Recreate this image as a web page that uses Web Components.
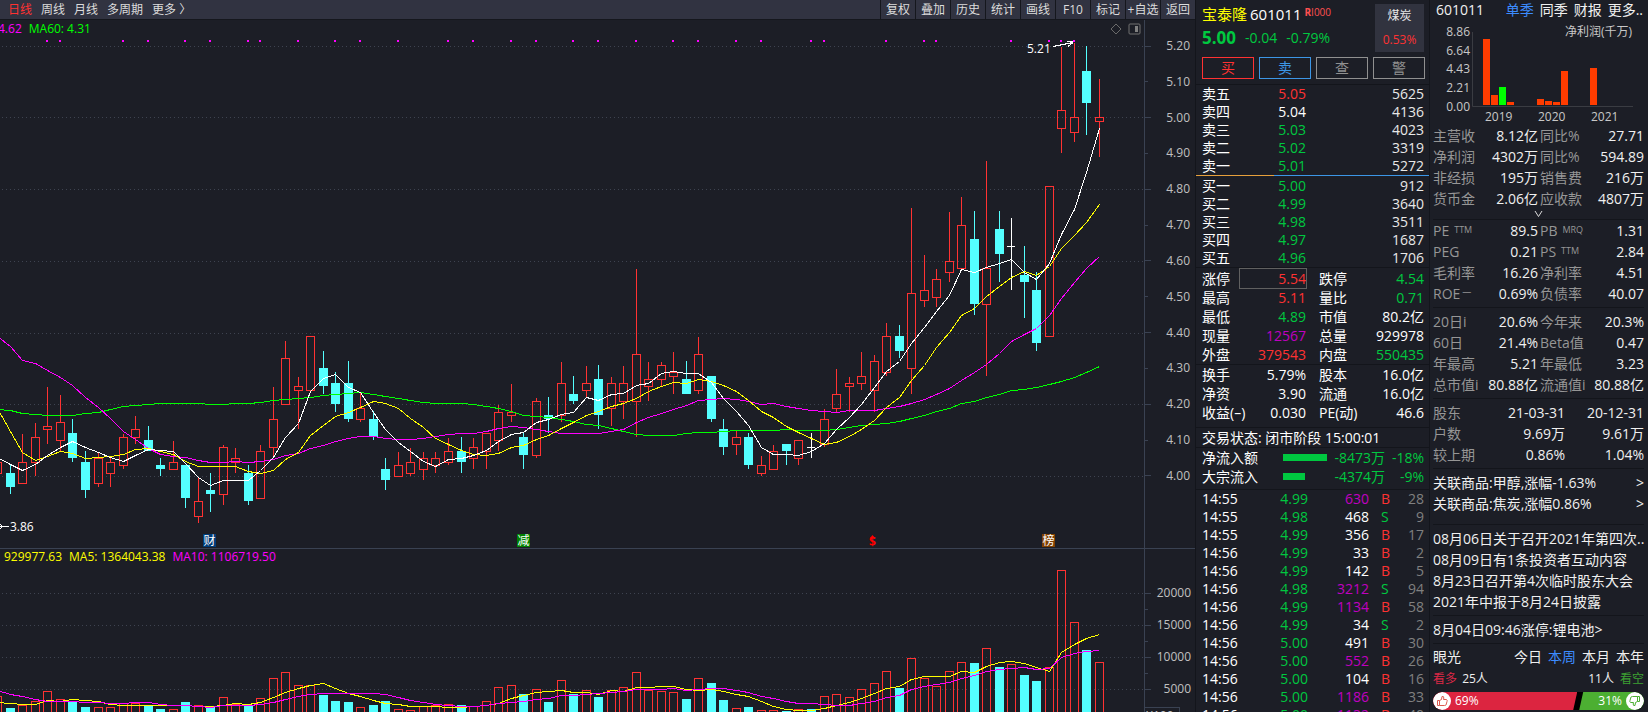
<!DOCTYPE html>
<html lang="zh-CN">
<head>
<meta charset="utf-8">
<title>宝泰隆 601011</title>
<style>
  body { margin: 0; background: #1c1e26; }
</style>
</head>
<body>
<stock-app></stock-app>
<script>
const BASE = `
  * { box-sizing: border-box; }
  table { border-collapse: collapse; table-layout: fixed; width: 100%; }
  td, th { padding: 0; font-weight: 400; text-align: left; white-space: nowrap; }
  a { color: inherit; text-decoration: none; }
  button { font: inherit; color: inherit; background: none; border: 0; padding: 0; margin: 0; cursor: pointer; white-space: nowrap; }
  .r { text-align: right; }
  .up { color: #ff3232; } .dn { color: #00c840; } .big { color: #c000c0; } .mute { color: #808080; }
`;
function define(name, render) {
  customElements.define(name, class extends HTMLElement {
    constructor() {
      super();
      this.attachShadow({ mode: 'open' }).innerHTML = render();
    }
  });
}

/* ---------- market data: [kind, high, body top, body bottom, low] ---------- */
const FIRST = -1;
const slotX = i => Math.round(9.9 + 12.517 * i);
const CANDLES = [
['U',462,462,474,474],['D',465,473,487,494],['U',434,462,484,484],['U',423,437,463,476],['U',387,426,430,444],['U',395,422,441,451],
['D',419,433,458,462],['D',451,462,490,498],['U',453,458,484,487],['U',457,462,474,487],['U',434,437,466,469],['U',416,429,438,444],
['D',426,440,451,451],['D',458,465,469,476],['U',441,462,470,470],['D',465,465,498,508],['U',477,501,517,523],['D',473,490,494,512],
['U',445,447,495,505],['U',448,458,463,473],['D',465,473,501,505],['U',445,451,499,499],['U',387,419,448,458],['U',341,358,405,405],
['U',377,386,391,429],['U',336,336,391,391],['D',351,368,386,394],['D',372,383,404,412],['D',361,383,419,422],['U',393,408,420,422],
['D',411,419,437,440],['D',458,469,480,490],['U',452,465,477,477],['U',448,462,474,476],['U',452,458,470,480],['U',452,458,466,473],
['U',438,451,463,465],['D',437,451,462,473],['U',438,447,459,469],['U',433,433,452,469],['U',405,412,441,451],['U',384,412,416,422],
['D',433,437,455,469],['U',398,401,456,458],['D',397,415,419,433],['U',362,383,416,422],['D',376,394,401,404],['U',366,383,391,397],
['D',365,379,415,429],['U',377,383,409,426],['U',366,383,402,419],['U',269,354,402,437],['U',362,379,387,401],['U',362,365,380,387],
['U',352,372,377,394],['D',361,379,394,394],['U',337,354,391,394],['D',376,376,419,422],['D',419,429,447,455],['U',431,437,445,455],
['D',433,437,465,469],['U',456,465,474,476],['U',445,451,470,470],['D',444,444,451,465],['U',440,440,459,465],['X',433,447,448,458],
['U',409,419,445,447],['U',369,394,409,412],['U',377,383,387,412],['U',352,376,384,390],['U',355,361,391,412],['U',323,336,373,376],
['D',325,336,351,358],['U',208,293,369,394],['U',255,290,301,307],['U',269,279,298,307],['U',212,261,273,282],['U',197,225,269,269],
['D',211,239,304,315],['U',161,268,305,376],['D',211,229,254,282],['X',218,246,247,290],['D',246,275,282,318],['D',272,290,343,351],
['U',186,186,337,337],['U',47,110,129,153],['U',43,117,133,142],['D',46,71,103,135],['U',79,117,122,157]];
const MA5 = [457,464,470,464,455,447,441,447,452,457,461,455,449,450,451,463,477,485,480,480,480,470,457,437,423,391,378,374,387,392,412,429,442,451,461,466,459,458,455,450,441,434,432,422,419,414,412,397,400,394,393,385,383,373,371,373,373,382,398,411,425,447,454,454,455,451,443,429,417,404,387,371,361,343,327,311,295,269,272,267,263,259,272,279,263,234,209,172,128];
const MA10 = [408,431,452,460,456,451,453,458,457,456,454,449,448,451,454,461,466,466,466,466,471,473,470,459,452,435,425,416,412,407,401,403,408,418,427,438,444,450,454,455,453,447,445,439,435,428,422,415,411,406,403,398,391,386,382,383,379,381,385,391,400,411,417,426,432,438,444,442,436,429,420,407,397,380,365,347,332,315,308,296,286,277,271,275,266,248,235,222,204];
const MA20 = [336,346,360,363,370,377,385,397,407,418,431,439,448,454,456,457,460,462,462,461,462,461,459,455,453,448,445,441,438,436,436,438,439,439,438,436,434,433,433,431,428,426,427,429,431,433,433,433,433,431,429,422,417,413,409,405,400,399,398,399,401,404,403,406,408,410,411,412,410,410,410,408,406,403,399,394,388,380,372,364,353,341,334,328,315,298,282,268,256];
const MA60 = [409,410,413,414,415,415,415,413,412,409,406,405,404,403,403,403,403,404,404,403,403,402,400,399,398,397,395,394,393,392,394,396,398,400,402,403,403,403,404,406,408,411,415,416,417,419,421,424,425,428,431,434,435,435,435,433,432,432,431,430,430,430,430,429,430,430,430,429,427,425,424,423,421,418,415,411,408,403,401,397,394,390,389,387,384,381,377,372,366];
const VOL = [696,708,705,701,691,699,702,707,707,707,703,703,706,709,709,702,705,707,697,704,706,698,678,672,685,685,695,701,702,707,705,701,709,710,706,705,704,705,706,701,687,685,694,689,702,680,694,690,697,690,687,672,690,691,692,699,678,683,700,708,707,710,710,711,709,709,696,694,697,689,683,671,688,658,678,686,671,662,663,648,667,664,675,681,667,570,622,650,662];
const VMA5 = [702,703,704,704,700,701,699,700,701,704,705,705,705,705,705,705,706,706,705,703,704,702,697,692,688,685,683,688,693,696,700,703,704,706,706,706,707,707,706,705,703,698,695,692,691,690,692,692,694,690,691,687,687,686,686,689,690,689,691,694,696,701,706,709,710,710,708,705,702,698,693,688,686,679,676,676,676,671,672,666,662,661,663,667,671,652,644,638,634];
const VMA10 = [690,694,696,699,701,701,701,702,702,703,703,702,702,704,705,705,706,707,705,705,705,704,702,699,696,694,693,693,693,693,693,694,697,700,702,704,705,706,706,705,703,702,701,699,698,695,695,694,693,692,691,689,689,689,688,690,689,688,688,690,692,696,698,701,703,703,704,705,705,703,701,697,695,689,686,684,682,678,675,671,669,668,667,669,668,657,653,651,650];
const MARKS = [3,4,9,11,14,16,19,20,23,26,28,31,35,37,40,42,45,47,50,53,55,58,60,64,65,70,73,74,80,83,84,85];

const RED = '#ff3232', CYAN = '#54ffff';
const line = (ys, c) => `<polyline fill="none" stroke="${c}" points="${ys.map((y, k) => `${slotX(k + FIRST) + .5},${y + .5}`).join(' ')}"/>`;
const box = (x, t, b, c, hollow) => hollow
  ? `<rect x="${x - 3.5}" y="${t + .5}" width="8" height="${b - t - 1}" fill="none" stroke="${c}"/>`
  : `<rect x="${x - 4}" y="${t}" width="9" height="${b - t}" fill="${c}"/>`;
const vline = (x, a, b, c) => b > a ? `<rect x="${x}" y="${a}" width="1" height="${b - a}" fill="${c}"/>` : '';
const grid = ys => ys.map(y => `<line x1="2" x2="1143" y1="${y}.5" y2="${y}.5" stroke="#3e4350" stroke-dasharray="1 3"/>`).join('');
const drawCandle = ([kind, h, t, b, l], k) => {
  const x = slotX(k + FIRST);
  if (kind === 'X') return vline(x, h, l, '#fff') + `<rect x="${x - 4}" y="${t}" width="8" height="1" fill="#fff"/>`;
  const c = kind === 'U' ? RED : CYAN;
  return vline(x, h, t, c) + vline(x, b, l, c) + box(x, t, b, c, kind === 'U');
};
const drawVolume = (y, k) => {
  const up = CANDLES[k][0] === 'U' || k === 81;
  return box(slotX(k + FIRST), y, 722, up ? RED : CYAN, up);
};

define('chart-toolbar', () => `<style>${BASE}
  :host { display: flex; justify-content: space-between; height: 20px; background: #313341; border-bottom: 1px solid #15171d;
    font-size: 12px; line-height: 18px; color: #dcdcdc; }
  nav { display: flex; }
  .periods { gap: 9px; padding-left: 8px; }
  .tools button { width: 35px; border-left: 1px solid #15171d; }
  .on { color: #ff3232; }
</style>
<nav class="periods"><button class="on">日线</button><button>周线</button><button>月线</button><button>多周期</button><button>更多 〉</button></nav>
<nav class="tools">${['复权','叠加','历史','统计','画线','F10','标记','+自选','返回'].map(t => `<button>${t}</button>`).join('')}</nav>`);

const CHART = `${BASE}
  :host { display: grid; grid-template-columns: minmax(0, 1fr) 51px; min-height: 0; font-size: 12px; overflow: hidden; }
  .plot { position: relative; min-height: 0; min-width: 0; overflow: hidden; }
  .plot > svg { display: block; width: 100%; height: 100%; }
  .legend { position: absolute; left: 0; top: 0; display: flex; line-height: 18px; white-space: pre; }
  .yellow { color: #ff0; } .pink { color: #f0f; } .green { color: #0f0; }
  .axis { border-left: 1px solid #3a4252; color: #c0c0c0; display: flex; flex-direction: column; overflow: hidden; }
  .axis div { display: flex; align-items: center; justify-content: space-between; padding-right: 5px; }
  .axis div::before { content: ""; width: 3px; height: 1px; background: #3a4252; }
  .axis .major::before { width: 6px; }
`;
const pct = (x, y) => `left:${(x / 1144 * 100).toFixed(3)}%;top:${((y - 20) / 528 * 100).toFixed(3)}%`;

define('price-chart', () => `<style>${CHART}
  .legend { left: -2px; gap: 7px; }
  .axis { justify-content: space-between; padding: 17px 0 63px; line-height: 18px; }
  .note, .badge, .tools { position: absolute; line-height: 16px; color: #fff; }
  .badge { min-width: 13px; line-height: 18px; text-align: center; }
  .badge::before { content: ""; position: absolute; inset: 2px 0 3px; background: var(--fill); z-index: -1; }
  .badge { z-index: 0; }
  .coin { display: grid; justify-items: center; line-height: 14px; color: #f00; font-weight: 700; }
  .coin svg { position: absolute; top: 0; }
  .tools { right: 3px; top: 3px; display: flex; gap: 6px; }
</style>
<div class="plot">
  <svg viewBox="0 20 1144 528" preserveAspectRatio="none" shape-rendering="crispEdges" role="img" aria-label="日线">
    ${grid([46, 117, 189, 261, 333, 404, 476])}
    ${MARKS.map(i => `<rect x="${slotX(i) - 1}" y="40" width="2" height="2" fill="#f0f"/>`).join('')}
    ${CANDLES.map(drawCandle).join('')}
    ${line(MA60, '#0f0')}${line(MA20, '#f0f')}${line(MA10, '#ff0')}${line(MA5, '#fff')}
    <path d="M1053 46.5L1073 42.5M1067 41.5H1073M1068 46.5L1073 42.5M0 526.5H9M0 524.5L3 526.5M0 528.5L3 526.5" stroke="#fff" fill="none"/>
  </svg>
  <div class="legend"><span class="pink">4.62</span><span class="green">MA60: 4.31</span></div>
  <div class="tools">
    <svg width="12" height="12" viewBox="0 0 12 12" fill="none" stroke="#6a6a6a"><path d="M6 1L11 6L6 11L1 6Z"/></svg>
    <svg width="13" height="12" viewBox="0 0 13 12"><rect x="1" y="1" width="11" height="10" rx="1" fill="none" stroke="#707070"/><path d="M7 3H10V9H7Z" fill="#808080"/></svg>
  </div>
  <span class="note" style="${pct(1027, 41)}">5.21</span>
  <span class="note" style="${pct(10, 519)}">3.86</span>
  <span class="badge" style="${pct(203, 532)};--fill:#003c78">财</span>
  <span class="badge" style="${pct(517, 532)};--fill:#008000">减</span>
  <span class="badge coin" style="${pct(866, 535)}"><svg width="5" height="3" viewBox="0 0 5 3"><path d="M2.500 0L5 3H0Z" fill="#f00"/></svg>$</span>
  <span class="badge" style="${pct(1042, 532)};--fill:#804000">榜</span>
</div>
<div class="axis">${['5.20','5.10','5.00','4.90','4.80','4.70','4.60','4.50','4.40','4.30','4.20','4.10','4.00'].map((v, i) => `<div class="${i % 2 ? '' : 'major'}">${v}</div>`).join('')}</div>`);

define('volume-chart', () => `<style>${CHART}
  :host { border-top: 1px solid #3a4252; }
  .legend { left: 4px; gap: 7px; line-height: 16px; }
  .axis { padding-top: 36px; line-height: 16px; }
  .axis div { flex: 0 0 16px; padding-right: 4px; }
  .axis .unit { flex: 0 0 18px; align-self: flex-start; width: 35px; margin-top: 10px; padding: 0 3px 0 1px; border: 1px solid #3a4252; border-left: 0; }
  .axis .unit::before { display: none; }
</style>
<div class="plot">
  <svg viewBox="0 549 1144 163" preserveAspectRatio="none" shape-rendering="crispEdges" role="img" aria-label="成交量">
    ${grid([593, 625, 657, 689])}
    ${VOL.map(drawVolume).join('')}
    ${line(VMA5, '#ff0')}${line(VMA10, '#f0f')}
  </svg>
  <div class="legend"><span class="yellow">929977.63</span><span class="yellow">MA5: 1364043.38</span><span class="pink">MA10: 1106719.50</span></div>
</div>
<div class="axis"><div class="major">20000</div><div></div><div class="major">15000</div><div></div><div class="major">10000</div><div></div><div class="major">5000</div><div class="unit">X100</div></div>`);

define('quote-header', () => `<style>${BASE}
  :host { display: block; padding: 4px 0 5px; }
  .top { display: grid; grid-template-columns: 1fr 49px; height: 53px; }
  .name { display: flex; gap: 3px; font-size: 15px; line-height: 20px; white-space: nowrap; }
  .name b { font-weight: 400; color: #ff0; }
  .name small { font-size: 10px; line-height: 16px; color: #ff5050; }
  .price { display: flex; gap: 9px; align-items: center; font-size: 14px; line-height: 28px; }
  .price b { font-size: 17px; }
  .sector { height: 48px; background: #31333f; font-size: 12px; line-height: 24px; text-align: center; color: #e8e8e8; }
  .sector span { display: block; }
  .actions { display: grid; grid-template-columns: repeat(4, 1fr); gap: 5px; margin-right: -1px; }
  .actions button { height: 22px; line-height: 18px; border: 1px solid #909090; color: #909090; }
  .actions .buy { color: #ff3232; border-color: #ff3232; } .actions .sell { color: #3c96e6; border-color: #3c96e6; }
</style>
<div class="top">
  <div>
    <div class="name"><b>宝泰隆</b><span>601011</span><small><strong>R</strong>I000</small></div>
    <div class="price dn"><b>5.00</b><span>-0.04</span><span>-0.79%</span></div>
  </div>
  <a href="#sector" class="sector"><span>煤炭</span><span class="up">0.53%</span></a>
</div>
<div class="actions"><button class="buy">买</button><button class="sell">卖</button><button>查</button><button>警</button></div>`);

const bookRows = rows => rows.map(([n, p, v, c]) => `<tr><th>${n}</th><td class="r ${c}">${p}</td><td class="r vol">${v}</td></tr>`).join('');
define('order-book', () => `<style>${BASE}
  :host { display: block; line-height: 18px; }
  .w1 { width: 40px; } .w2 { width: 64px; }
  .vol { color: #e8e8e8; }
  .mid { height: 1px; margin: 0 -5px 1px -6px; background: linear-gradient(to right, #e6a03c 33.5%, #3c96e6 33.5%); }
</style>
<table><colgroup><col class="w1"><col class="w2"><col></colgroup>${bookRows([['卖五','5.05','5625','up'],['卖四','5.04','4136',''],['卖三','5.03','4023','dn'],['卖二','5.02','3319','dn'],['卖一','5.01','5272','dn']])}</table>
<div class="mid"></div>
<table><colgroup><col class="w1"><col class="w2"><col></colgroup>${bookRows([['买一','5.00','912','dn'],['买二','4.99','3640','dn'],['买三','4.98','3511','dn'],['买四','4.97','1687','dn'],['买五','4.96','1706','dn']])}</table>`);

const statTable = rows => `<table><colgroup><col class="w1"><col class="w2"><col class="w3"><col></colgroup>${rows.map(([a, b, c, d, e, f]) =>
  `<tr><th>${a}</th><td class="r ${c}">${b}</td><th class="second">${d}</th><td class="r ${f}">${e}</td></tr>`).join('')}</table>`;
const STAT = `${BASE}
  :host { display: block; line-height: 19px; }
  .w1 { width: 38px; } .w2 { width: 66px; } .w3 { width: 52px; }
  .second { padding-left: 13px; }
`;
define('quote-limits', () => `<style>${STAT}
  td.limit { outline: 1px solid #606060; outline-offset: 0; }
</style>${statTable([['涨停','5.54','up limit','跌停','4.54','dn'],['最高','5.11','up','量比','0.71','dn'],['最低','4.89','dn','市值','80.2亿',''],['现量','12567','big','总量','929978',''],['外盘','379543','up','内盘','550435','dn']])}`);
define('quote-ratios', () => `<style>${STAT}</style>${statTable([['换手','5.79%','','股本','16.0亿',''],['净资','3.90','','流通','16.0亿',''],['收益(–)','0.030','','PE(动)','46.6','']])}`);

define('money-flow', () => `<style>${BASE}
  :host { display: block; line-height: 19px; }
  i { display: block; height: 7px; background: #00c840; width: 44px; } i.half { width: 22px; }
</style>
<table><colgroup><col style="width:81px"><col style="width:48px"><col style="width:54px"><col></colgroup>
<tr><th>净流入额</th><td><i></i></td><td class="r dn">-8473万</td><td class="r dn">-18%</td></tr>
<tr><th>大宗流入</th><td><i class="half"></i></td><td class="r dn">-4374万</td><td class="r dn">-9%</td></tr></table>`);

define('tick-list', () => `<style>${BASE}
  :host { display: block; line-height: 18px; overflow: hidden; }
  .b { padding-left: 12px; }
</style>
<table><colgroup><col style="width:42px"><col style="width:64px"><col style="width:61px"><col style="width:24px"><col></colgroup>
${[['14:55','4.99','630','B','28',1],['14:55','4.98','468','S','9'],['14:55','4.99','356','B','17'],['14:56','4.99','33','B','2'],['14:56','4.99','142','B','5'],['14:56','4.98','3212','S','94',1],['14:56','4.99','1134','B','58',1],['14:56','4.99','34','S','2'],['14:56','5.00','491','B','30'],['14:56','5.00','552','B','26',1],['14:56','5.00','104','B','16'],['14:56','5.00','1186','B','33',1],['14:56','5.00','1132','B','40',1]]
  .map(([t, p, v, s, n, big]) => `<tr><td>${t}</td><td class="r dn">${p}</td><td class="r ${big ? 'big' : ''}">${v}</td><td class="b ${s === 'B' ? 'up' : 'dn'}">${s}</td><td class="r mute">${n}</td></tr>`).join('')}</table>`);

define('quote-panel', () => `<style>${BASE}
  :host { display: flex; flex-direction: column; border-left: 1px solid #13151b; color: #fff; font-size: 14px; overflow: hidden; }
  section { padding: 0 5px 0 6px; border-bottom: 1px solid #13151b; flex: none; }
  section:last-child { border: 0; flex: 1 1 0; min-height: 0; overflow: hidden; }
  .ratios { padding-bottom: 5px; } .flow { padding-bottom: 3px; } .limits { padding-top: 1px; }
  .status { line-height: 19px; white-space: nowrap; }
</style>
<section><quote-header></quote-header></section>
<section class="book"><order-book></order-book></section>
<section class="limits"><quote-limits></quote-limits></section>
<section class="ratios"><quote-ratios></quote-ratios></section>
<section class="status">交易状态: 闭市阶段 15:00:01</section>
<section class="flow"><money-flow></money-flow></section>
<section><tick-list></tick-list></section>`);

define('profit-chart', () => `<style>${BASE}
  :host { display: block; }
  svg { display: block; font-size: 12px; fill: #c8c8c8; }
</style>
<svg width="211" height="105" viewBox="1433 20 211 105" role="img" aria-label="净利润">
  <path d="M1472.5 32V106.5H1633" fill="none" stroke="#3a3c42"/>
  ${[['8.86',36],['6.64',55],['4.43',73],['2.21',92],['0.00',111]].map(([t, y]) => `<text x="1470" y="${y}" text-anchor="end">${t}</text>`).join('')}
  ${[['2019',1485],['2020',1538],['2021',1591]].map(([t, x]) => `<text x="${x}" y="121">${t}</text>`).join('')}
  <text x="1632" y="36" text-anchor="end">净利润(千万)</text>
  ${[[1483,39],[1491,95],[1499,87,1],[1507,102],[1537,99],[1545,101],[1553,102],[1561,71],[1590,68]].map(([x, y, g]) => `<rect x="${x}" y="${y}" width="7" height="${105 - y}" fill="${g ? '#00ff00' : '#ff3c00'}"/>`).join('')}
</svg>`);

const metric = rows => `<table><colgroup><col style="width:48px"><col style="width:57px"><col style="width:50px"><col></colgroup>${rows.map(([a, b, c, d]) =>
  `<tr><th>${a}</th><td class="r">${b}</td><th class="second">${c}</th><td class="r">${d}</td></tr>`).join('')}</table>`;
const METRIC = `${BASE}
  :host { display: block; line-height: 21px; }
  th { color: #969696; } td { color: #f0f0f0; }
  .second { padding-left: 2px; }
  sup { font-size: 9px; line-height: 10px; vertical-align: 3px; margin-left: 5px; }
  button { display: block; width: 100%; height: 10px; }
  svg { display: block; margin: auto; }
`;
define('metric-income', () => `<style>${METRIC}</style>${metric([['主营收','8.12亿','同比%','27.71'],['净利润','4302万','同比%','594.89'],['非经损','195万','销售费','216万'],['货币金','2.06亿','应收款','4807万']])}
<button aria-label="展开"><svg width="9" height="8" viewBox="0 0 9 8" fill="none" stroke="#dcdcdc"><path d="M1 1L4.5 6.500L8 1"/></svg></button>`);
define('metric-valuation', () => `<style>${METRIC}</style>${metric([['PE<sup>TTM</sup>','89.5','PB<sup>MRQ</sup>','1.31'],['PEG','0.21','PS<sup>TTM</sup>','2.84'],['毛利率','16.26','净利率','4.51'],['ROE<sup style="margin-left:2px">一</sup>','0.69%','负债率','40.07']])}`);
define('metric-market', () => `<style>${METRIC}</style>${metric([['20日i','20.6%','今年来','20.3%'],['60日','21.4%','Beta值','0.47'],['年最高','5.21','年最低','3.23'],['总市值i','80.88亿','流通值i','80.88亿']])}`);
define('metric-holders', () => `<style>${METRIC}</style><table><colgroup><col style="width:52px"><col style="width:80px"><col></colgroup>
<tr><th>股东</th><td class="r">21-03-31</td><td class="r">20-12-31</td></tr><tr><th>户数</th><td class="r">9.69万</td><td class="r">9.61万</td></tr><tr><th>较上期</th><td class="r">0.86%</td><td class="r">1.04%</td></tr></table>`);

define('sentiment-poll', () => `<style>${BASE}
  :host { display: block; line-height: 21px; }
  .row { display: flex; gap: 6px; white-space: nowrap; }
  .row :first-child { margin-right: auto; }
  .row .bull { margin-right: 2px; }
  .on { color: #3c8cff; }
  .votes { font-size: 12px; padding-top: 1px; }
  .bull { color: #dc2846; } .bear { color: #3ca032; }
  .bar { display: flex; height: 18px; margin-top: 3px; background: #000; border-radius: 9px; color: #fff; font-size: 12px; line-height: 18px; overflow: hidden; }
  .bar div { display: flex; gap: 4px; }
  .bar .long { flex: 69; background: #dc2540; clip-path: polygon(0 0, 100% 0, calc(100% - 4px) 100%, 0 100%); }
  .bar .short { flex: 31; background: #4caf32; justify-content: flex-end; margin-left: 2px; clip-path: polygon(4px 0, 100% 0, 100% 100%, 0 100%); }
</style>
<div class="row"><span>眼光</span><button>今日</button><button class="on">本周</button><button>本月</button><button>本年</button></div>
<div class="row votes"><span><span class="bull">看多</span> 25人</span><span>11人</span><span class="bear">看空</span></div>
<div class="bar">
  <div class="long"><svg width="18" height="18" viewBox="0 0 18 18"><circle cx="9" cy="9" r="9" fill="#fff"/><path d="M4.500 8.500H6.500V13.500H4.500ZM6.500 8.500L8.500 7.500L9 4.500Q11 4 10.800 6L10.500 7.500H13.500Q14.500 8 14 9.500L13 13Q12.500 13.500 11.500 13.500H6.500" fill="none" stroke="#dc5a50" stroke-linejoin="round"/></svg><span>69%</span></div>
  <div class="short"><span>31%</span><svg width="18" height="18" viewBox="0 0 18 18"><circle cx="9" cy="9" r="9" fill="#fff"/><path d="M13.500 9.500H11.500V4.500H13.500ZM11.500 9.500L9.500 10.500L9 13.500Q7 14 7.200 12L7.500 10.500H4.500Q3.500 10 4 8.500L5 5Q5.500 4.500 6.500 4.500H11.500" fill="none" stroke="#4caf32" stroke-linejoin="round"/></svg></div>
</div>`);

define('finance-panel', () => `<style>${BASE}
  :host { display: block; border-left: 1px solid #13151b; padding: 0 4px 0 3px; color: #f0f0f0; font-size: 14px; line-height: 21px; overflow: hidden; }
  section { padding: 3px 0; border-bottom: 1px solid #13151b; }
  section:last-child { border: 0; padding-top: 2px; }
  header { display: flex; gap: 6px; line-height: 20px; padding: 0 1px 0 3px; white-space: nowrap; }
  header span { margin-right: auto; }
  .on { color: #3c8cff; }
  .income { padding: 0; } .valuation { padding: 0 0 3px; } .related { padding-bottom: 10px; }
  section > a { display: flex; justify-content: space-between; white-space: nowrap; }
</style>
<header><span>601011</span><button class="on">单季</button><button>同季</button><button>财报</button><button>更多..</button></header>
<profit-chart></profit-chart>
<section class="income"><metric-income></metric-income></section>
<section class="valuation"><metric-valuation></metric-valuation></section>
<section><metric-market></metric-market></section>
<section><metric-holders></metric-holders></section>
<section class="related"><a href="#methanol">关联商品:甲醇,涨幅-1.63%<span>&gt;</span></a><a href="#coke">关联商品:焦炭,涨幅0.86%<span>&gt;</span></a></section>
<section><a href="#n1">08月06日关于召开2021年第四次..</a><a href="#n2">08月09日有1条投资者互动内容</a><a href="#n3">8月23日召开第4次临时股东大会</a><a href="#n4">2021年中报于8月24日披露</a></section>
<section><a href="#n5">8月04日09:46涨停:锂电池&gt;</a></section>
<section><sentiment-poll></sentiment-poll></section>`);

define('stock-app', () => `<style>${BASE}
  :host { display: grid; grid-template-columns: minmax(0, 1fr) 234px 219px; height: 100vh; overflow: hidden;
    background: #1c1e26; font-family: "Open Sans", "Noto Sans CJK SC", sans-serif; }
  main { display: grid; grid-template-rows: auto minmax(0, 528fr) minmax(0, 164fr); min-height: 0; }
</style>
<main><chart-toolbar></chart-toolbar><price-chart></price-chart><volume-chart></volume-chart></main>
<quote-panel></quote-panel>
<finance-panel></finance-panel>`);
</script>
</body>
</html>
